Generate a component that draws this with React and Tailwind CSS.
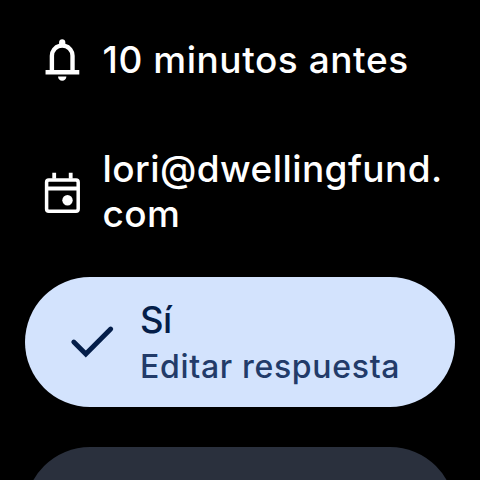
function BellIcon() {
  return (
    <svg className="w-[50px] h-[50px]" viewBox="-0.1 0 24 24" fill="currentColor">
      <path d="M4 19v-2.2h2v-6.8q0-2.075 1.25-3.687T10.5 4.2v-.7q0-.625.438-1.062T12 2t1.063.438T13.5 3.5v.7q2 .5 3.25 2.113T18 10v6.8h2.2v2.2zm8 3q-.825 0-1.412-.587T10 19.9h4q0 .925-.587 1.513T12 22M8.1 16.8h7.8v-6.8q0-1.65-1.15-2.775T12 6.1T9.25 7.225T8.1 10z" />
    </svg>
  )
}

function CalendarIcon() {
  return (
    <svg className="w-[50px] h-[50px]" viewBox="0 0 50 50" fill="none" stroke="currentColor">
      <path d="M17.2 4.7v6M33.7 4.7v6" strokeWidth={3.8} />
      <rect x="9.6" y="12" width="31.6" height="31.2" rx="2.2" strokeWidth={3.5} />
      <path d="M9.6 20.5h31.6" strokeWidth={3.8} />
      <circle cx="30.5" cy="32.3" r="5.2" fill="currentColor" stroke="none" />
    </svg>
  )
}

function CheckIcon() {
  return (
    <svg
      className="w-[50px] h-[50px]"
      viewBox="0 0 50 50"
      fill="none"
      stroke="currentColor"
      strokeWidth={4.9}
      strokeLinecap="round"
    >
      <path d="M7.8 25l12 12l24.9-24.9" />
    </svg>
  )
}

export default function App() {
  return (
    <div className="w-[480px] h-[480px] overflow-hidden bg-black text-white font-['Inter',sans-serif] font-medium">
      {/* Reminder */}
      <div className="flex items-center h-[120px] pl-[37px] gap-[15.5px]">
        <BellIcon />
        <p className="text-[37px] leading-[44px] whitespace-nowrap tracking-[0.55px]">10 minutos antes</p>
      </div>

      {/* Calendar account */}
      <div className="flex items-center h-[145px] pl-[37px] gap-[15.5px]">
        <CalendarIcon />
        <p className="text-[37px] leading-[45px] whitespace-nowrap tracking-[0.42px] pb-[3px]">
          <span className="block">lori@dwellingfund.</span>
          <span className="block">com</span>
        </p>
      </div>

      {/* Response */}
      <button className="mt-3 ml-[25px] w-[430px] h-[130px] pl-[41px] rounded-full flex items-center gap-6 bg-[#d3e3fd] text-[#041e49] text-left">
        <CheckIcon />
        <span className="pt-[3px]">
          <span className="block text-[36.5px] leading-[45px] tracking-[-0.5px]">Sí</span>
          <span className="block text-[32px] leading-[47px] whitespace-nowrap tracking-[0.68px] text-[#223b69]">Editar respuesta</span>
        </span>
      </button>

      {/* Next button, scrolled partly out of view */}
      <div className="mt-10 ml-[25px] w-[430px] h-[130px] rounded-full bg-[#2a303d]" />
    </div>
  )
}
